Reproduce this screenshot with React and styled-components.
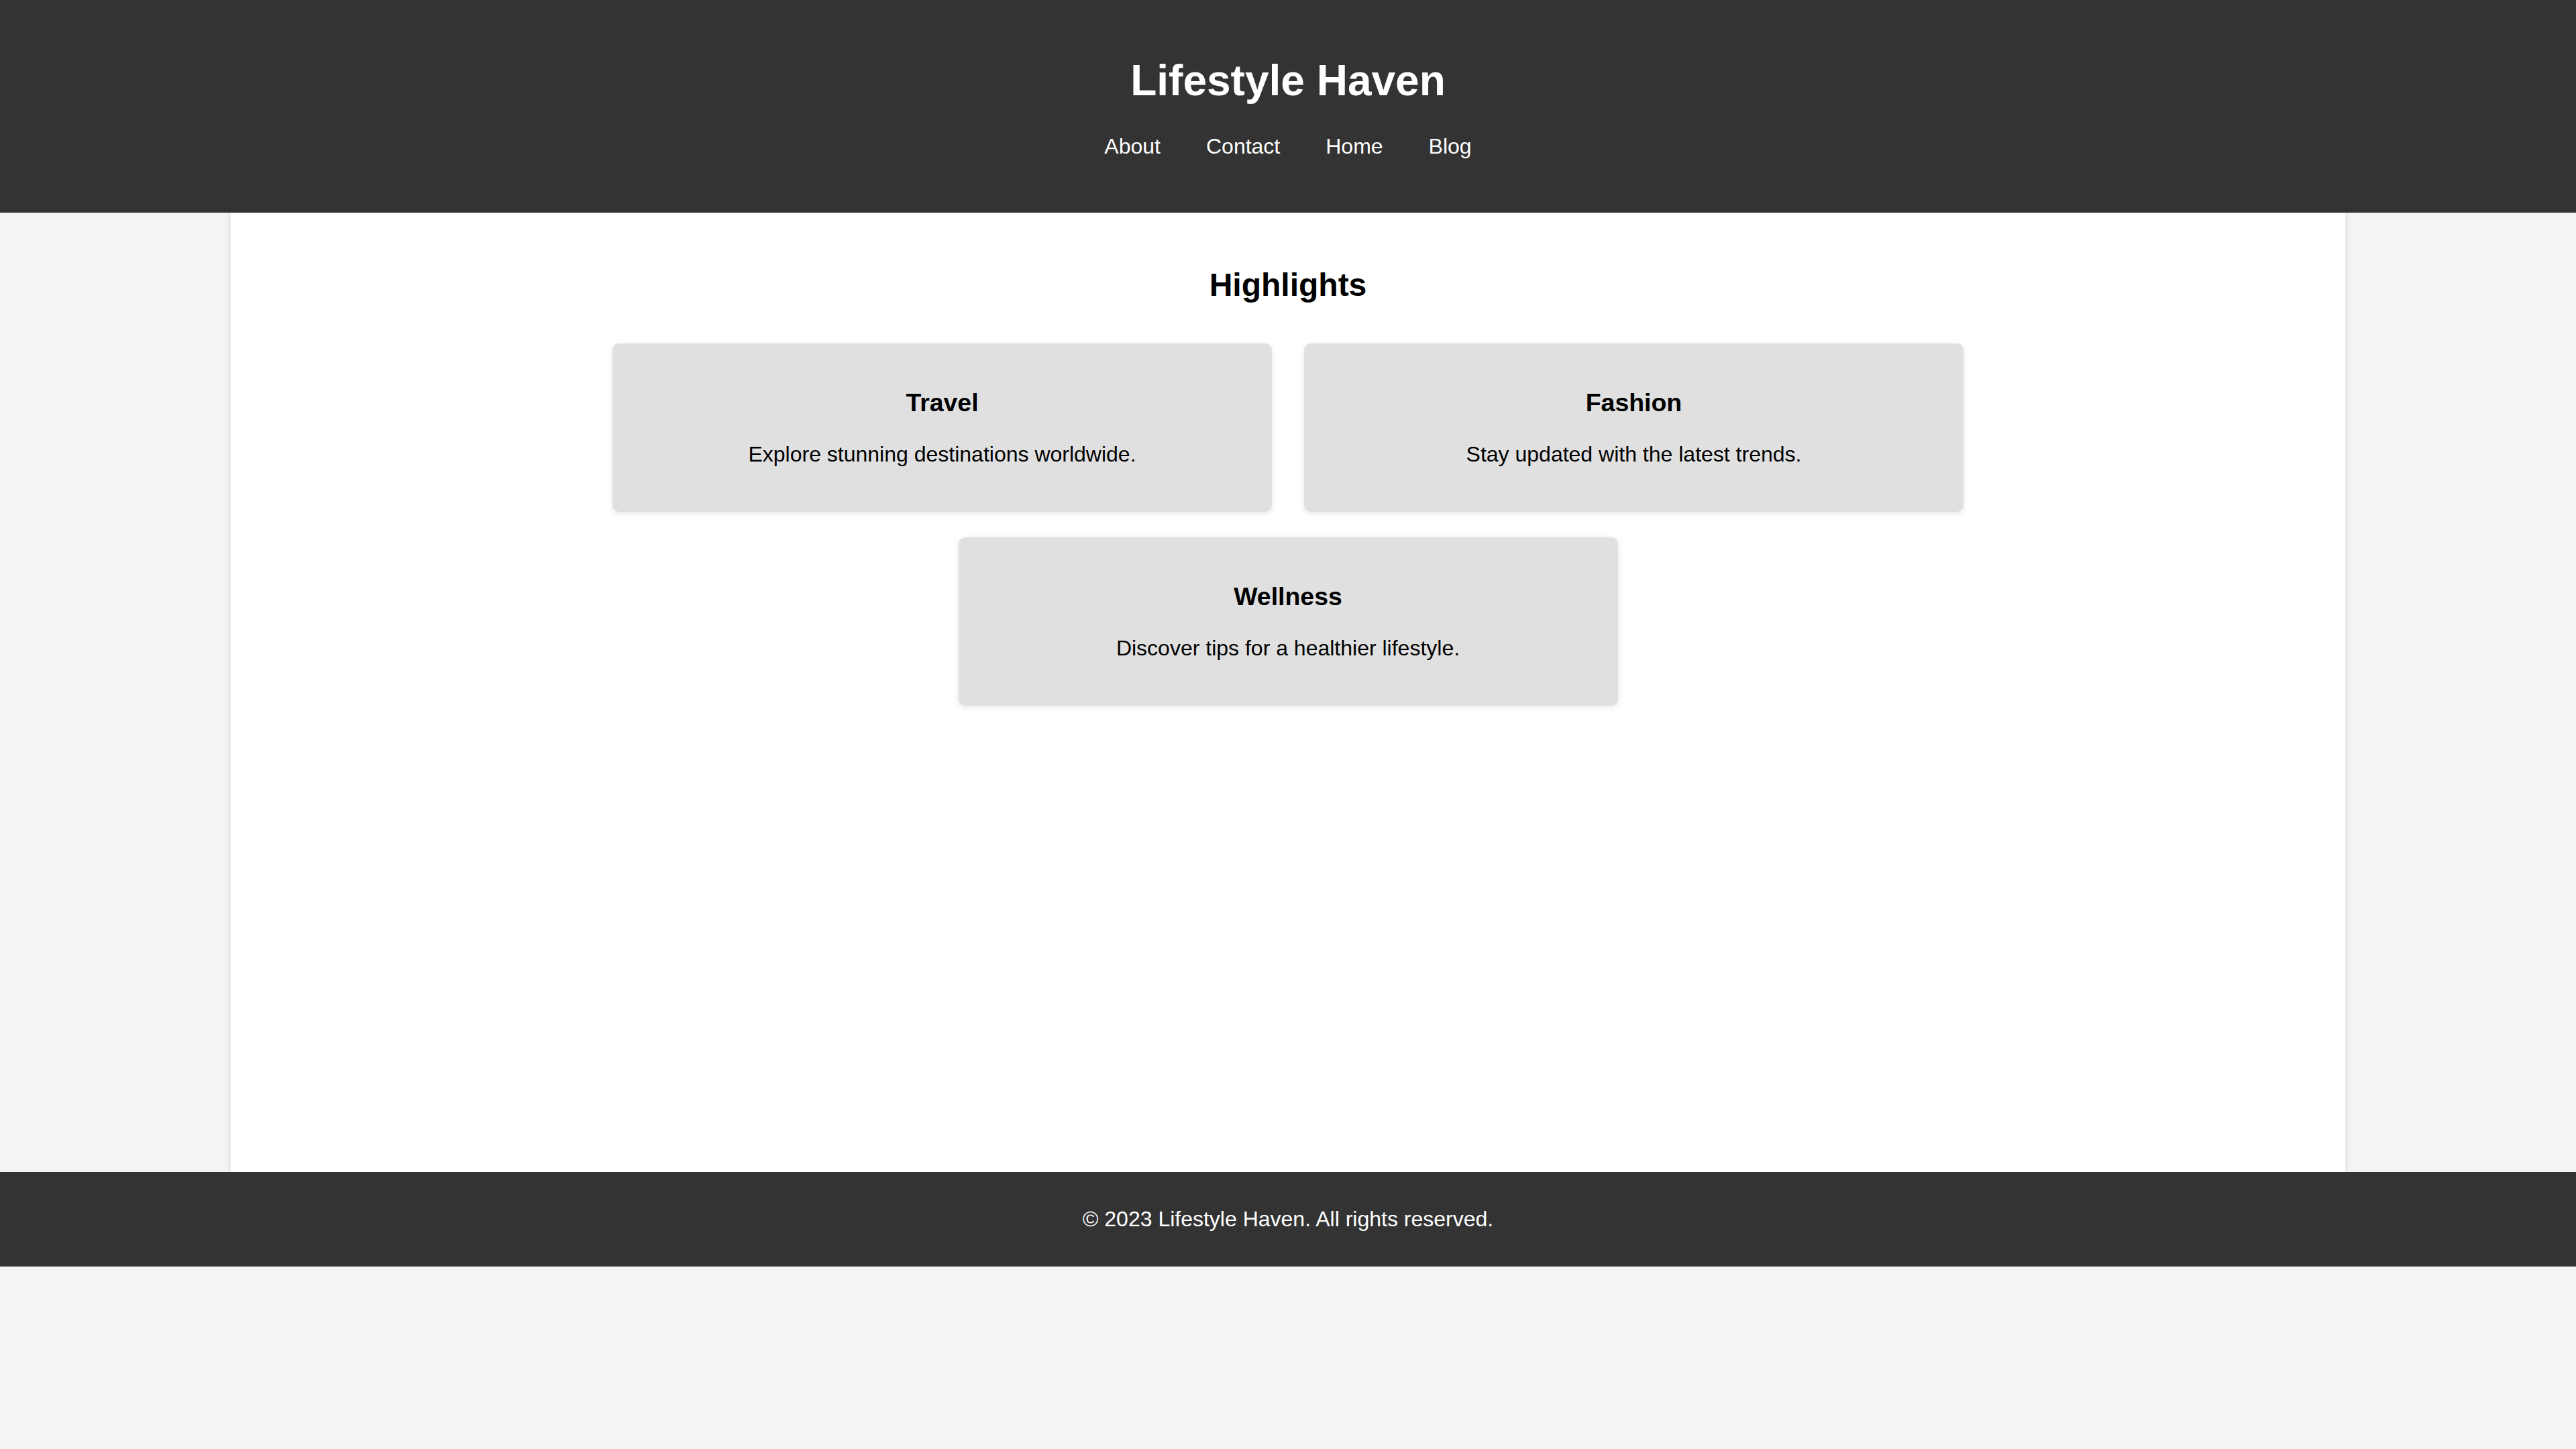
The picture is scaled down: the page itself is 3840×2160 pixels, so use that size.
import React from "react";
import styled, { createGlobalStyle } from "styled-components";

const GlobalStyle = createGlobalStyle`
  body {
    margin: 0;
    font-family: "Liberation Sans", Arial, sans-serif;
    font-size: 32px;
    background: #f4f4f4;
    color: #000;
  }
`;

const Header = styled.header`
  background: #333;
  color: #fff;
  text-align: center;
  padding: 40px 0 80px;
`;

const Title = styled.h1`
  margin: 43px 0;
  font-size: 64px;
  font-weight: 700;
`;

const Nav = styled.nav`
  display: flex;
  justify-content: center;
  gap: 68px;
`;

const NavLink = styled.a`
  color: #fff;
  text-decoration: none;
  font-size: 32px;
`;

const Main = styled.main`
  width: 80%;
  min-height: 1350px;
  margin: 0 auto;
  padding: 40px;
  background: #fff;
  box-shadow: 0 0 10px rgba(0, 0, 0, 0.1);
  text-align: center;
`;

const SectionTitle = styled.h2`
  margin: 40px 0;
  font-size: 48px;
  font-weight: 700;
`;

const CardGrid = styled.div`
  display: flex;
  flex-wrap: wrap;
  justify-content: center;
  gap: 38px 48px;
  max-width: 2020px;
  margin: 0 auto;
  padding-top: 20px;
`;

const Card = styled.div`
  box-sizing: border-box;
  width: 983px;
  padding: 30px 30px 35px;
  background: #e0e0e0;
  border-radius: 10px;
  box-shadow: 0 2px 10px rgba(0, 0, 0, 0.1);
`;

const CardTitle = styled.h3`
  margin: 37px 0;
  font-size: 37.44px;
  font-weight: 700;
`;

const CardText = styled.p`
  margin: 32px 0;
  font-size: 32px;
`;

const Footer = styled.footer`
  background: #333;
  color: #fff;
  text-align: center;
  padding: 20px 0;

  p {
    margin: 32px 0;
  }
`;

const links = ["About", "Contact", "Home", "Blog"];

const highlights = [
  { title: "Travel", text: "Explore stunning destinations worldwide." },
  { title: "Fashion", text: "Stay updated with the latest trends." },
  { title: "Wellness", text: "Discover tips for a healthier lifestyle." },
];

const App = () => (
  <>
    <GlobalStyle />
    <Header>
      <Title>Lifestyle Haven</Title>
      <Nav>
        {links.map((l) => (
          <NavLink key={l} href="#">
            {l}
          </NavLink>
        ))}
      </Nav>
    </Header>
    <Main>
      <SectionTitle>Highlights</SectionTitle>
      <CardGrid>
        {highlights.map((h) => (
          <Card key={h.title}>
            <CardTitle>{h.title}</CardTitle>
            <CardText>{h.text}</CardText>
          </Card>
        ))}
      </CardGrid>
    </Main>
    <Footer>
      <p>© 2023 Lifestyle Haven. All rights reserved.</p>
    </Footer>
  </>
);

export default App;
